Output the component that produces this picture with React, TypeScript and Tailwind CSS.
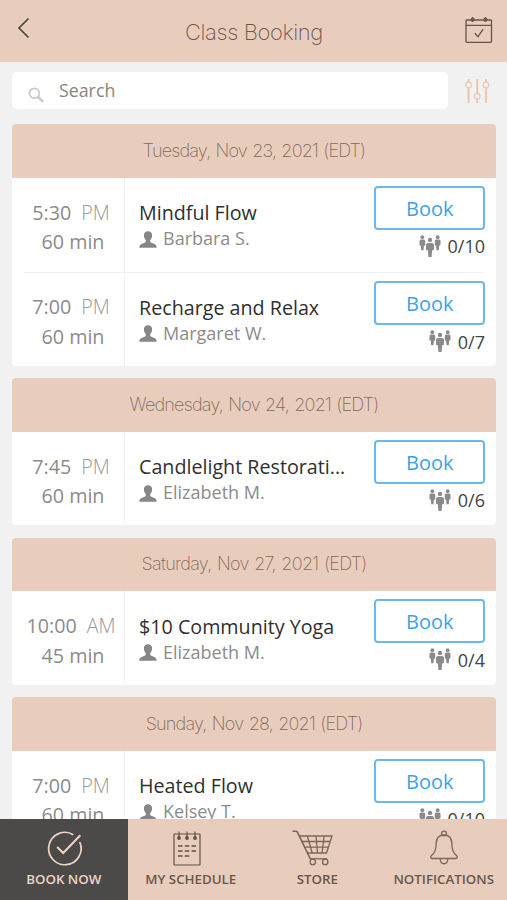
import React from 'react';

type Klass = {
  time: string;
  meridiem: string;
  duration: string;
  name: string;
  teacher: string;
  spots: string;
};

type Day = { date: string; tracking: string; classes: Klass[] };

const days: Day[] = [
  {
    date: 'Tuesday, Nov 23, 2021 (EDT)',
    tracking: 'tracking-[-0.82px]',
    classes: [
      { time: '5:30', meridiem: 'PM', duration: '60 min', name: 'Mindful Flow', teacher: 'Barbara S.', spots: '0/10' },
      { time: '7:00', meridiem: 'PM', duration: '60 min', name: 'Recharge and Relax', teacher: 'Margaret W.', spots: '0/7' },
    ],
  },
  {
    date: 'Wednesday, Nov 24, 2021 (EDT)',
    tracking: 'tracking-[-0.78px]',
    classes: [
      { time: '7:45', meridiem: 'PM', duration: '60 min', name: 'Candlelight Restorati...', teacher: 'Elizabeth M.', spots: '0/6' },
    ],
  },
  {
    date: 'Saturday, Nov 27, 2021 (EDT)',
    tracking: 'tracking-[-0.68px]',
    classes: [
      { time: '10:00', meridiem: 'AM', duration: '45 min', name: '$10 Community Yoga', teacher: 'Elizabeth M.', spots: '0/4' },
    ],
  },
  {
    date: 'Sunday, Nov 28, 2021 (EDT)',
    tracking: 'tracking-[-0.78px]',
    classes: [
      { time: '7:00', meridiem: 'PM', duration: '60 min', name: 'Heated Flow', teacher: 'Kelsey T.', spots: '0/10' },
    ],
  },
];

function BackIcon() {
  return (
    <svg width="14" height="22" viewBox="0 0 14 22" fill="none" stroke="#4b4640" strokeWidth="1.7">
      <path d="M11.500 1.500 2 11l9.500 9.500" />
    </svg>
  );
}

function CalendarIcon() {
  return (
    <svg width="28" height="28" viewBox="0 0 28 28" fill="none" stroke="#65554b" strokeWidth="1.300">
      <rect x="1" y="4" width="25.500" height="22.300" rx="0.800" />
      <path d="M1 9.400h25.500M9.800 17.200l3.200 3.500 5.200-7.600" />
      <circle cx="7.600" cy="3.700" r="1.500" fill="#a58f82" />
      <circle cx="20.400" cy="3.700" r="1.500" fill="#a58f82" />
      <path d="M7.600 1v5M20.400 1v5" strokeWidth="1" />
    </svg>
  );
}

function SearchIcon() {
  return (
    <svg width="16" height="16" viewBox="0 0 16 16" fill="none" stroke="#c9c9c9">
      <circle cx="6.400" cy="6.300" r="4.900" strokeWidth="1.800" />
      <path d="m10.200 10 4.200 4.200" strokeWidth="2.600" strokeLinecap="round" />
    </svg>
  );
}

function FilterIcon() {
  return (
    <svg width="26" height="26" viewBox="0 0 26 26" fill="none" stroke="#ebc9b6">
      <path d="M4.500 1v3M4.500 10v15M13.200 1v14M13.200 21v4M22 1v3M22 10v15" strokeWidth="2.200" />
      <circle cx="4.500" cy="7" r="2.800" strokeWidth="1.300" />
      <circle cx="13.200" cy="18.300" r="2.800" strokeWidth="1.300" />
      <circle cx="22" cy="7" r="2.800" strokeWidth="1.300" />
    </svg>
  );
}

function PersonIcon() {
  return (
    <svg className="mt-px" width="18" height="17" viewBox="0 0 18 17" fill="#868686">
      <path d="M9 .3c2.800 0 4.200 1.800 4.100 4.300-.1 2-.9 3.500-1.900 4.600-.3 1.600.3 2.200 1.700 2.800 2.500.9 4.700 1.500 4.800 4.700H.3c.1-3.200 2.300-3.800 4.800-4.700 1.400-.6 2-1.200 1.700-2.800-1-1.100-1.800-2.600-1.900-4.600C4.800 2.100 6.200.3 9 .3Z" />
    </svg>
  );
}

function GroupIcon() {
  return (
    <svg width="22" height="23" viewBox="0 0 22 23" fill="#8a8a8a">
      <circle cx="3.300" cy="2.200" r="1.900" />
      <path d="M1.800 4.500h3q1.400 0 1.400 1.600v4.200l-1.300.6-.4 4.400H2.200l-.4-4.500L.5 10V6.100q0-1.600 1.300-1.600Z" />
      <circle cx="18.700" cy="2.200" r="1.900" />
      <path d="M17.200 4.500h3q1.300 0 1.300 1.600V10l-1.300.8-.4 4.500h-2.300l-.4-4.400-1.300-.6V6.100q0-1.600 1.400-1.600Z" />
      <circle cx="11" cy="4.900" r="2.200" />
      <path d="M9.200 8h3.600q2.200 0 2.200 2v4.700l-1.900.8-.5 6.500H9.400l-.5-6.500-1.900-.8V10q0-2 2.200-2Z" />
    </svg>
  );
}

function CheckCircleIcon() {
  return (
    <svg width="36" height="36" viewBox="0 0 36 36" fill="none" stroke="#efd3c3" strokeWidth="1.700">
      <path d="M27.300 4.700A16.200 16.200 0 1 0 33.700 12" />
      <path d="m11.200 17 6 6L34.300 5.200" strokeWidth="2" />
    </svg>
  );
}

function NotepadIcon() {
  return (
    <svg width="28" height="35" viewBox="0 0 28 35" fill="none" stroke="#5f5148" strokeWidth="1.200">
      <rect x="1" y="3" width="26" height="31" rx="0.500" />
      <path d="M6 .5v7M14 .5v7M22 .5v7" strokeWidth="1.200" />
      <g fill="#5f5148" stroke="none">
        <circle cx="6" cy="7" r="1.900" />
        <circle cx="14" cy="7" r="1.900" />
        <circle cx="22" cy="7" r="1.900" />
      </g>
      <path d="M5 15h18M5 20h18M5 25h12" strokeWidth="1.400" strokeDasharray="4.500 2.300" />
    </svg>
  );
}

function CartIcon() {
  return (
    <svg width="41" height="36" viewBox="0 0 41 36" fill="none" stroke="#79675c" strokeWidth="1.300">
      <path d="M.5 1.300H4q1 0 1.500 1l12.800 26.500" strokeWidth="1.600" />
      <path d="M7.300 6H40l-5.500 17H15.400M9.800 11.500h28.400M12.600 17.200h23.800" />
      <path d="m15.300 6 4.900 17M24 6l1.500 17M32.200 6 30 23" />
      <path d="M35 28.800H18" />
      <circle cx="20.800" cy="31.900" r="2.700" />
      <circle cx="33.200" cy="31.900" r="2.700" />
    </svg>
  );
}

function BellIcon() {
  return (
    <svg width="30" height="36" viewBox="0 0 30 36" fill="none" stroke="#79675c" strokeWidth="1.300">
      <circle cx="15" cy="3.500" r="2.400" />
      <path d="M15 5C9.500 5 7.200 9 7.100 14c-.1 6-.9 8.700-4.300 11.200-1.200.9-1.600 3.300.2 3.300h24c1.800 0 1.400-2.400.2-3.300-3.400-2.500-4.200-5.200-4.300-11.200C22.800 9 20.500 5 15 5Z" />
      <path d="M11.200 28.500c.2 7 7.400 7 7.600 0" />
    </svg>
  );
}

function ClassRow({ item, first, last }: { item: Klass; first: boolean; last: boolean }) {
  return (
    <div className={last ? 'relative flex h-[93.500px]' : 'relative flex h-[94.500px]'}>
      {!first && <div className="absolute inset-x-3 top-0 h-px bg-[#efefef]" />}
      <div className="w-[113px] shrink-0 border-r border-[#f3f3f3] pt-[20px] text-[19.700px] leading-[29.500px] text-[#8b8b8b]">
        <div className="flex justify-center gap-[10px] pl-[6px]">
          <span>{item.time}</span>
          <span className="font-light text-[#999]">{item.meridiem}</span>
        </div>
        <div className="pl-[10px] text-center">{item.duration}</div>
      </div>
      <div className="min-w-0 flex-1 whitespace-nowrap pl-[14px] pt-[21.500px]">
        <div className="text-[19.700px] leading-[28px] text-[#2f2f2f]">{item.name}</div>
        <div className="flex items-center gap-[6px] text-[18px] leading-[23px] text-[#8b8b8b]">
          <PersonIcon />
          <span>{item.teacher}</span>
        </div>
      </div>
      <div
        className={
          first
            ? 'flex w-[122px] shrink-0 flex-col items-end pr-[11px] pt-[8px]'
            : 'flex w-[122px] shrink-0 flex-col items-end pr-[11px] pt-[9px]'
        }
      >
        <button className="h-[44px] w-[111.500px] rounded-[4px] border-2 border-[#6bb9ec] pl-px pt-[2px] text-[20px] leading-[28px] text-[#3da2e5]">
          Book
        </button>
        <div className="mt-[3.500px] flex items-center gap-[7px] text-[18px] leading-[26px] text-[#444]">
          <GroupIcon />
          <span>{item.spots}</span>
        </div>
      </div>
    </div>
  );
}

function Tab({ icon, label, active }: { icon: React.ReactNode; label: string; active?: boolean }) {
  return (
    <div
      className={
        active
          ? 'flex flex-col items-center bg-[#4b4a49] pt-[11px] text-[#efd3c3]'
          : 'flex flex-col items-center pt-[11px] text-[#66574e]'
      }
    >
      <div className="flex h-[36px] items-center">{icon}</div>
      <span className="mt-[4px] text-[13.300px] font-semibold leading-[18px]">{label}</span>
    </div>
  );
}

export default function App() {
  return (
    <div className="flex h-[900px] w-[507px] flex-col overflow-hidden bg-[#f1f1f1] font-['Open_Sans',sans-serif]">
      <header className="flex h-[61.500px] shrink-0 items-center justify-between bg-[#e9cdbc] pl-[17px] pr-[14px]">
        <div className="mb-[5px] w-[28px]">
          <BackIcon />
        </div>
        <h1 className="pt-[4px] pr-[2px] font-['Inter',sans-serif] text-[22px] font-extralight tracking-[-0.400px] text-[#6d584c]">
          Class Booking
        </h1>
        <div className="mb-px">
          <CalendarIcon />
        </div>
      </header>

      <main className="min-h-0 flex-1 overflow-hidden px-[12px] pt-[10.500px]">
        <div className="flex h-[36.500px] items-center">
          <div className="flex h-full w-[436px] items-center rounded-[5px] bg-white pl-[16px]">
            <div className="mt-[9px]">
              <SearchIcon />
            </div>
            <span className="pl-[15px] text-[17.800px] leading-[24px] text-[#858585]">Search</span>
          </div>
          <div className="ml-[16px] pt-px">
            <FilterIcon />
          </div>
        </div>

        <div className="mt-[15.500px] flex w-[484px] flex-col gap-[12.500px]">
          {days.map((day) => (
            <section key={day.date} className="overflow-hidden rounded-[4px] bg-white">
              <h2
                className={`flex h-[53.500px] items-center justify-center bg-[#e9cdbc] pb-[1px] font-['Inter',sans-serif] text-[18px] font-extralight text-[#806a5e] [word-spacing:1px] ${day.tracking}`}
              >
                {day.date}
              </h2>
              {day.classes.map((item, i) => (
                <ClassRow
                  key={item.time + item.name}
                  item={item}
                  first={i === 0}
                  last={i === day.classes.length - 1}
                />
              ))}
            </section>
          ))}
        </div>
      </main>

      <nav className="grid h-[81px] shrink-0 grid-cols-[127.500px_126.500px_126.500px_126.500px] bg-[#e9cdbc]">
        <Tab icon={<CheckCircleIcon />} label="BOOK NOW" active />
        <Tab
          icon={
            <div className="pr-[8px]">
              <NotepadIcon />
            </div>
          }
          label="MY SCHEDULE"
        />
        <Tab
          icon={
            <div className="pr-[9px]">
              <CartIcon />
            </div>
          }
          label="STORE"
        />
        <Tab icon={<BellIcon />} label="NOTIFICATIONS" />
      </nav>
    </div>
  );
}
